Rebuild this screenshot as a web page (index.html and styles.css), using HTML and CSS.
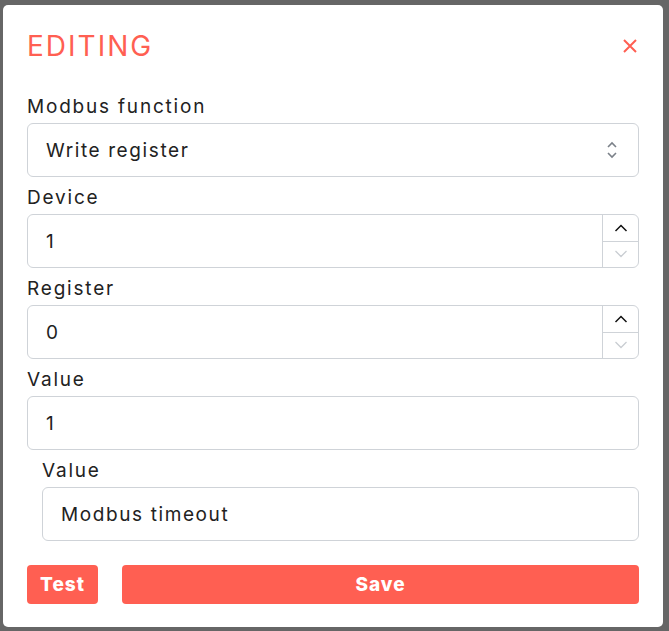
FILE: index.html
```html
<!DOCTYPE html>
<html lang="en">
<head>
<meta charset="utf-8">
<title>Editing</title>
<link rel="stylesheet" href="styles.css">
</head>
<body>
<div class="modal">
  <div class="modal-header">
    <h1 class="title">EDITING</h1>
    <button class="close" aria-label="Close">
      <svg width="16" height="16" viewBox="0 0 16 16"><path d="M2 2L14 14M14 2L2 14" stroke="#ff5f52" stroke-width="2" fill="none"/></svg>
    </button>
  </div>
  <div class="form">
    <div class="group">
      <label class="label">Modbus function</label>
      <div class="field select">
        <span class="value">Write register</span>
        <svg class="sel-arrows" width="12" height="18" viewBox="0 0 12 18"><path d="M2 6L6 2L10 6M2 12L6 16L10 12" stroke="#7b8189" stroke-width="1.6" fill="none"/></svg>
      </div>
    </div>
    <div class="group">
      <label class="label">Device</label>
      <div class="field number">
        <span class="value">1</span>
        <div class="spin">
          <div class="spin-btn"><svg width="14" height="8" viewBox="0 0 14 8"><path d="M1.5 7L7 1.5L12.5 7" stroke="#111" stroke-width="1.5" fill="none"/></svg></div>
          <div class="spin-btn"><svg width="14" height="8" viewBox="0 0 14 8"><path d="M1.5 1L7 6.5L12.5 1" stroke="#c9cdd2" stroke-width="1.3" fill="none"/></svg></div>
        </div>
      </div>
    </div>
    <div class="group">
      <label class="label">Register</label>
      <div class="field number">
        <span class="value">0</span>
        <div class="spin">
          <div class="spin-btn"><svg width="14" height="8" viewBox="0 0 14 8"><path d="M1.5 7L7 1.5L12.5 7" stroke="#111" stroke-width="1.5" fill="none"/></svg></div>
          <div class="spin-btn"><svg width="14" height="8" viewBox="0 0 14 8"><path d="M1.5 1L7 6.5L12.5 1" stroke="#c9cdd2" stroke-width="1.3" fill="none"/></svg></div>
        </div>
      </div>
    </div>
    <div class="group">
      <label class="label">Value</label>
      <div class="field">
        <span class="value">1</span>
      </div>
    </div>
    <div class="group nested">
      <label class="label">Value</label>
      <div class="field">
        <span class="value">Modbus timeout</span>
      </div>
    </div>
  </div>
  <div class="actions">
    <button class="btn btn-test">Test</button>
    <button class="btn btn-save">Save</button>
  </div>
</div>
</body>
</html>
```

FILE: styles.css
```css
html, body {
  margin: 0;
  padding: 0;
}
body {
  background: #666666;
  font-family: "Inter", "DejaVu Sans", sans-serif;
  color: #222;
  padding: 5px 0 0 3px;
  height: 631px;
  box-sizing: border-box;
  overflow: hidden;
}
.modal {
  width: 660px;
  height: 622px;
  background: #fff;
  border-radius: 5px;
  box-sizing: border-box;
  padding: 0 24px 0 24px;
  display: flex;
  flex-direction: column;
}
.modal-header {
  display: flex;
  justify-content: space-between;
  align-items: center;
  height: 80px;
  padding-top: 2px;
  box-sizing: border-box;
}
.title {
  margin: 0;
  font-size: 28px;
  font-weight: 400;
  color: #ff5f52;
  letter-spacing: 2px;
}
.close {
  border: 0;
  background: none;
  padding: 0;
  margin-right: 1px;
  width: 16px;
  height: 16px;
  display: flex;
}
.form {
  display: flex;
  flex-direction: column;
  gap: 10px;
  margin-top: 11px;
}
.group {
  display: flex;
  flex-direction: column;
  gap: 5px;
}
.nested {
  margin-left: 15px;
}
.label {
  font-size: 19px;
  line-height: 22px;
  color: #222;
  letter-spacing: 1.8px;
}
.field {
  height: 54px;
  border: 1px solid #cfd3d8;
  border-radius: 6px;
  box-sizing: border-box;
  display: flex;
  align-items: center;
  padding-left: 18px;
  font-size: 19px;
  color: #222;
  letter-spacing: 1.6px;
}
.value {
  flex: 1;
}
.select {
  padding-right: 20px;
}
.number {
  padding-right: 0;
  align-items: stretch;
}
.number .value {
  display: flex;
  align-items: center;
}
.spin {
  width: 35px;
  border-left: 1px solid #cfd3d8;
  display: flex;
  flex-direction: column;
}
.spin-btn {
  flex: 1;
  display: flex;
  align-items: center;
  justify-content: center;
}
.spin-btn + .spin-btn {
  border-top: 1px solid #cfd3d8;
}
.actions {
  display: flex;
  gap: 24px;
  margin-top: 24px;
}
.btn {
  height: 39px;
  border: 0;
  border-radius: 4px;
  background: #ff5f52;
  color: #fff;
  font-family: "Inter", "DejaVu Sans", sans-serif;
  font-weight: 800;
  font-size: 19px;
  letter-spacing: 1px;
}
.btn-test {
  width: 71px;
}
.btn-save {
  flex: 1;
}
```
